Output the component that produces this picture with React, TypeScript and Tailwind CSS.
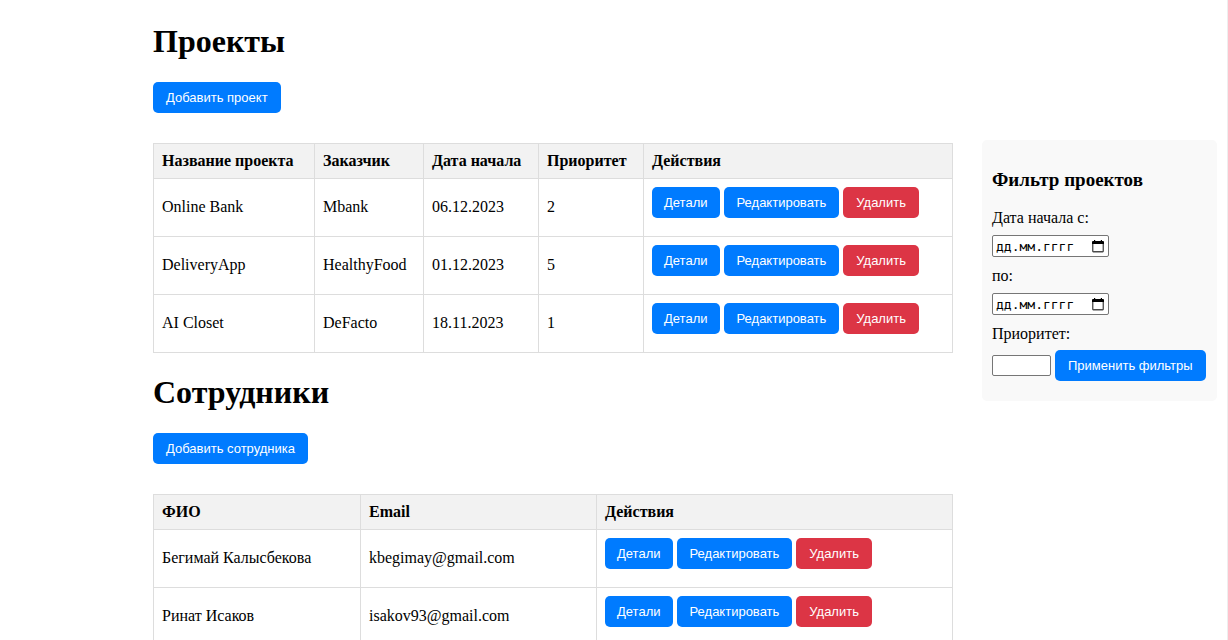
import type { ReactNode } from "react";

const projects = [
  { name: "Online Bank", customer: "Mbank", start: "06.12.2023", priority: 2 },
  { name: "DeliveryApp", customer: "HealthyFood", start: "01.12.2023", priority: 5 },
  { name: "AI Closet", customer: "DeFacto", start: "18.11.2023", priority: 1 },
];

const employees = [
  { name: "Бегимай Калысбекова", email: "kbegimay@gmail.com" },
  { name: "Ринат Исаков", email: "isakov93@gmail.com" },
];

type ButtonProps = { children: ReactNode; danger?: boolean; padding?: string };

function Button({ children, danger = false, padding = "px-[13px]" }: ButtonProps) {
  return (
    <button
      type="button"
      className={`h-[31px] cursor-pointer rounded-[5px] font-['Liberation_Sans',Arial,sans-serif] text-[13px] leading-[15px] whitespace-nowrap text-white ${padding} ${
        danger ? "bg-[#dc3545] hover:bg-[#c82333]" : "bg-[#007bff] hover:bg-[#0056b3]"
      }`}
    >
      {children}
    </button>
  );
}

function Head({ children }: { children: ReactNode }) {
  return (
    <th className="h-[35px] border border-[#dddddd] bg-[#f2f2f2] px-2 text-left font-bold">{children}</th>
  );
}

function Cell({ children }: { children: ReactNode }) {
  return <td className="border border-[#dddddd] px-2 pb-0.5">{children}</td>;
}

function Actions() {
  return (
    <td className="h-[58px] border border-[#dddddd] px-2 pt-2 align-top">
      <div className="flex gap-1">
        <Button padding="px-3">Детали</Button>
        <Button>Редактировать</Button>
        <Button danger>Удалить</Button>
      </div>
    </td>
  );
}

function DateField({ id, label }: { id: string; label: string }) {
  return (
    <div className="mb-2.5 flex flex-col items-start gap-2">
      <label htmlFor={id}>{label}</label>
      <div className="flex h-[22px] w-[117px] items-center rounded-[2px] border border-[#767676] bg-white pr-1 pl-[3px]">
        <input
          id={id}
          type="text"
          placeholder="дд.мм.гггг"
          className="min-w-0 flex-1 bg-transparent font-['DejaVu_Sans_Mono',monospace] text-[13px] leading-[15px] text-black outline-none placeholder:text-black"
        />
        <button type="button" aria-label="Открыть календарь" className="shrink-0">
          <svg viewBox="0 0 12 13" className="h-[13px] w-3">
            <rect x="0.75" y="2.75" width="10.5" height="9" rx="0.5" fill="none" stroke="#4a4a4a" strokeWidth="1.3" />
            <path d="M2 0h1.2v1h5.6V0H10v1h1a1 1 0 0 1 1 1v2H0V2a1 1 0 0 1 1-1h1Z" fill="#000000" />
          </svg>
        </button>
      </div>
    </div>
  );
}

export default function App() {
  return (
    <div className="flex min-h-screen items-start justify-end gap-[29px] border-r border-[#eeeeee] bg-white pr-2.5 pl-2.5 font-['Liberation_Serif','Times_New_Roman',serif] text-base leading-[18px] text-black">
      <main className="max-w-[800px] flex-1 pt-[23px] pb-6">
        <section className="mb-[21px]">
          <h1 className="mb-[23px] text-[32px] leading-9 font-bold">Проекты</h1>
          <Button>Добавить проект</Button>
          <table className="mt-[30px] w-full table-fixed border-collapse">
            <colgroup>
              <col className="w-[161px]" />
              <col className="w-[109px]" />
              <col className="w-[115px]" />
              <col className="w-[105px]" />
              <col />
            </colgroup>
            <thead>
              <tr>
                <Head>Название проекта</Head>
                <Head>Заказчик</Head>
                <Head>Дата начала</Head>
                <Head>Приоритет</Head>
                <Head>Действия</Head>
              </tr>
            </thead>
            <tbody>
              {projects.map((p) => (
                <tr key={p.name}>
                  <Cell>{p.name}</Cell>
                  <Cell>{p.customer}</Cell>
                  <Cell>{p.start}</Cell>
                  <Cell>{p.priority}</Cell>
                  <Actions />
                </tr>
              ))}
            </tbody>
          </table>
        </section>

        <section>
          <h1 className="mb-[23px] text-[32px] leading-9 font-bold">Сотрудники</h1>
          <Button>Добавить сотрудника</Button>
          <table className="mt-[30px] w-full table-fixed border-collapse">
            <colgroup>
              <col className="w-[207px]" />
              <col className="w-[236px]" />
              <col />
            </colgroup>
            <thead>
              <tr>
                <Head>ФИО</Head>
                <Head>Email</Head>
                <Head>Действия</Head>
              </tr>
            </thead>
            <tbody>
              {employees.map((e) => (
                <tr key={e.email}>
                  <Cell>{e.name}</Cell>
                  <Cell>{e.email}</Cell>
                  <Actions />
                </tr>
              ))}
            </tbody>
          </table>
        </section>
      </main>

      <aside className="mt-[140px] w-[235px] shrink-0 rounded-[5px] bg-[#f9f9f9] px-2.5 pt-[29px] pb-5">
        <h3 className="mb-[18px] text-[19px] leading-[22px] font-bold">Фильтр проектов</h3>
        <form>
          <DateField id="start-from" label="Дата начала с:" />
          <DateField id="start-to" label="по:" />
          <label htmlFor="priority" className="mb-[7px] block">
            Приоритет:
          </label>
          <div className="flex items-center gap-1">
            <input
              id="priority"
              type="text"
              inputMode="numeric"
              className="h-[21px] w-[59px] rounded-[2px] border border-[#767676] bg-white px-0.5 font-['Liberation_Sans',Arial,sans-serif] text-[13px]"
            />
            <Button>Применить фильтры</Button>
          </div>
        </form>
      </aside>
    </div>
  );
}
